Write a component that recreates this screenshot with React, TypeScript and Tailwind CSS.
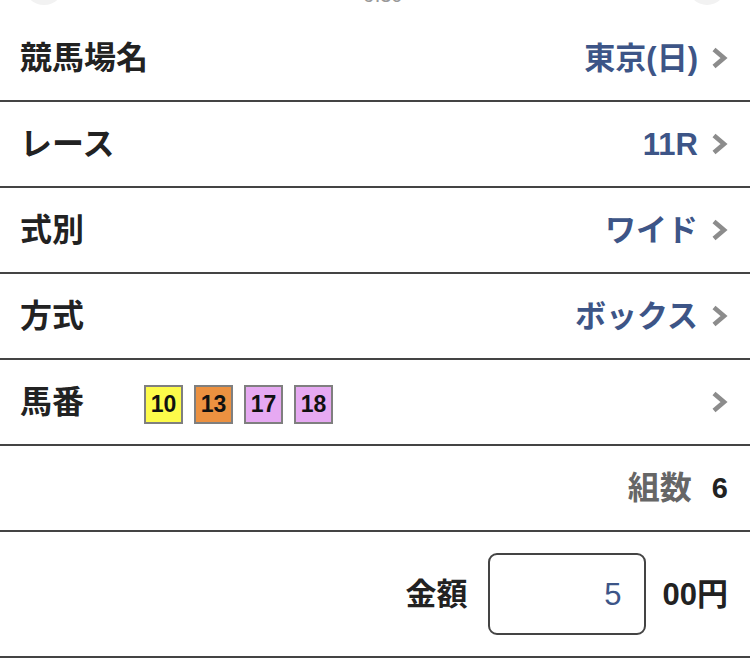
import React from "react";

const FONT = { fontFamily: '"Liberation Sans", "Noto Sans CJK JP", sans-serif' };

function Chevron() {
  return (
    <svg width="17" height="22" viewBox="0 0 17 22" className="shrink-0">
      <polyline points="3,2.5 13,11 3,19.5" fill="none" stroke="#8c8c8c" strokeWidth="4.6" strokeLinejoin="miter" />
    </svg>
  );
}

function Row({ label, value }: { label: string; value: string }) {
  return (
    <div className="h-[86px] border-b-2 border-[#444444] flex items-center pl-5 pr-[22px]">
      <div className="text-[32px] font-bold text-[#222222] leading-none">{label}</div>
      <div className="ml-auto flex items-center gap-[13px]">
        <div className="text-[31px] font-bold text-[#3d5587] leading-none">{value}</div>
        <Chevron />
      </div>
    </div>
  );
}

const horses = [
  { n: "10", bg: "bg-[#fdfb4a]" },
  { n: "13", bg: "bg-[#ec9140]" },
  { n: "17", bg: "bg-[#e6a9f2]" },
  { n: "18", bg: "bg-[#e6a9f2]" },
];

export default function App() {
  return (
    <div className="w-[750px] h-[660px] bg-white overflow-hidden" style={FONT}>
      <div className="h-[16px] overflow-hidden flex items-end justify-between px-[24px]">
        <div className="w-[40px] h-[40px] rounded-full bg-[#f2f2f2] mb-[11px]" />
        <div className="text-[20px] text-[#999999] leading-none mb-[11px] ml-[14px]">9:30</div>
        <div className="w-[38px] h-[40px] rounded-full bg-[#f2f2f2] mb-[11px]" />
      </div>
      <Row label="競馬場名" value="東京(日)" />
      <Row label="レース" value="11R" />
      <Row label="式別" value="ワイド" />
      <Row label="方式" value="ボックス" />
      <div className="h-[86px] border-b-2 border-[#444444] flex items-center pl-5 pr-[22px]">
        <div className="text-[32px] font-bold text-[#222222] leading-none w-[124px]">馬番</div>
        <div className="flex gap-[11px] mt-[5px]">
          {horses.map((h) => (
            <div
              key={h.n}
              className={`w-[39px] h-[39px] border-2 border-[#7f7f7f] ${h.bg} flex items-center justify-center text-[23px] font-bold text-[#111111] leading-none`}
            >
              {h.n}
            </div>
          ))}
        </div>
        <div className="ml-auto">
          <Chevron />
        </div>
      </div>
      <div className="h-[86px] border-b-2 border-[#444444] flex items-center justify-end pr-[22px]">
        <div className="text-[32px] font-bold text-[#666666] leading-none">組数</div>
        <div className="text-[29px] font-bold text-[#222222] leading-none ml-[20px]">6</div>
      </div>
      <div className="h-[126px] border-b-2 border-[#444444] flex items-center justify-end pr-[22px]">
        <div className="text-[31px] font-bold text-[#222222] leading-none">金額</div>
        <div className="ml-[20px] w-[158px] h-[82px] border-2 border-[#444444] rounded-[9px] flex items-center justify-end pr-[22px] text-[31px] text-[#3d5587] leading-none">
          5
        </div>
        <div className="ml-[17px] text-[31px] font-bold text-[#222222] leading-none">00円</div>
      </div>
    </div>
  );
}
